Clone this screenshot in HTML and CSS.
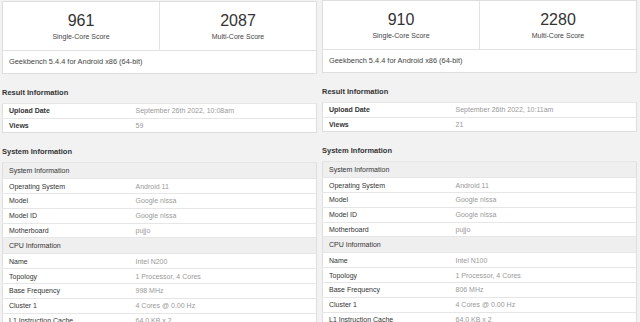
FILE: index.html
```html
<!DOCTYPE html>
<html lang="en">
<head>
    <meta charset="UTF-8">
    <title>Geekbench comparison</title>
    <link rel="stylesheet" href="styles.css">
</head>
<body>
    <div class="page">
        <div class="column first">
            <div class="card">
                <div class="scores">
                    <div class="score">
                        <div class="score-value">961</div>
                        <div class="score-label">Single-Core Score</div>
                    </div>
                    <div class="score">
                        <div class="score-value">2087</div>
                        <div class="score-label">Multi-Core Score</div>
                    </div>
                </div>
                <div class="version">Geekbench 5.4.4 for Android x86 (64-bit)</div>
            </div>

            <h3>Result Information</h3>
            <table class="info result">
                <tr><td class="name">Upload Date</td><td class="value">September 26th 2022, 10:08am</td></tr>
                <tr><td class="name">Views</td><td class="value">59</td></tr>
            </table>

            <h3>System Information</h3>
            <table class="info system">
                <tr class="head"><td colspan="2">System Information</td></tr>
                <tr><td class="name">Operating System</td><td class="value">Android 11</td></tr>
                <tr><td class="name">Model</td><td class="value">Google nissa</td></tr>
                <tr><td class="name">Model ID</td><td class="value">Google nissa</td></tr>
                <tr><td class="name">Motherboard</td><td class="value">pujjo</td></tr>
                <tr class="head"><td colspan="2">CPU Information</td></tr>
                <tr><td class="name">Name</td><td class="value">Intel N200</td></tr>
                <tr><td class="name">Topology</td><td class="value">1 Processor, 4 Cores</td></tr>
                <tr><td class="name">Base Frequency</td><td class="value">998 MHz</td></tr>
                <tr><td class="name">Cluster 1</td><td class="value">4 Cores @ 0.00 Hz</td></tr>
                <tr><td class="name">L1 Instruction Cache</td><td class="value">64.0 KB x 2</td></tr>
            </table>
        </div>

        <div class="column second">
            <div class="card">
                <div class="scores">
                    <div class="score">
                        <div class="score-value">910</div>
                        <div class="score-label">Single-Core Score</div>
                    </div>
                    <div class="score">
                        <div class="score-value">2280</div>
                        <div class="score-label">Multi-Core Score</div>
                    </div>
                </div>
                <div class="version">Geekbench 5.4.4 for Android x86 (64-bit)</div>
            </div>

            <h3>Result Information</h3>
            <table class="info result">
                <tr><td class="name">Upload Date</td><td class="value">September 26th 2022, 10:11am</td></tr>
                <tr><td class="name">Views</td><td class="value">21</td></tr>
            </table>

            <h3>System Information</h3>
            <table class="info system">
                <tr class="head"><td colspan="2">System Information</td></tr>
                <tr><td class="name">Operating System</td><td class="value">Android 11</td></tr>
                <tr><td class="name">Model</td><td class="value">Google nissa</td></tr>
                <tr><td class="name">Model ID</td><td class="value">Google nissa</td></tr>
                <tr><td class="name">Motherboard</td><td class="value">pujjo</td></tr>
                <tr class="head"><td colspan="2">CPU Information</td></tr>
                <tr><td class="name">Name</td><td class="value">Intel N100</td></tr>
                <tr><td class="name">Topology</td><td class="value">1 Processor, 4 Cores</td></tr>
                <tr><td class="name">Base Frequency</td><td class="value">806 MHz</td></tr>
                <tr><td class="name">Cluster 1</td><td class="value">4 Cores @ 0.00 Hz</td></tr>
                <tr><td class="name">L1 Instruction Cache</td><td class="value">64.0 KB x 2</td></tr>
            </table>
        </div>
    </div>
</body>
</html>
```

FILE: styles.css
```css
body {
    margin: 0;
    background: #f2f2f2;
    color: #333;
    font-family: "Liberation Sans", Arial, sans-serif;
    font-size: 7px;
    overflow: hidden;
}
.page {
    display: grid;
    grid-template-columns: 320px 320px;
    height: 322px;
    overflow: hidden;
}
.column {
    padding: 1px 3px 0 2px;
}
.column.second {
    margin-top: -1px;
}
.card {
    background: #fff;
    border: 1px solid #dedede;
}
.scores {
    display: flex;
    border-bottom: 1px solid #e2e2e2;
}
.score {
    flex: 1;
    text-align: center;
    padding: 10px 0 9px;
}
.score + .score {
    border-left: 1px solid #e2e2e2;
}
.score-value {
    font-size: 16px;
    line-height: 18px;
    color: #333;
}
.score-label {
    line-height: 9px;
    margin-top: 2px;
    color: #444;
}
.version {
    padding: 6px 6px 7px;
    font-size: 7.4px;
    line-height: 9px;
    color: #444;
}
h3 {
    margin: 14px 0 5px;
    font-size: 7.5px;
    line-height: 10px;
    font-weight: bold;
    color: #333;
}
.info {
    width: 100%;
    border-collapse: collapse;
    background: #fff;
    border: 1px solid #dedede;
}
.info td {
    height: 14.6px;
    padding: 0 6px;
    border-top: 1px solid #e6e6e6;
    line-height: 9px;
    box-sizing: border-box;
}
.info.system td {
    height: 14.8px;
}
.info .name {
    width: 127px;
    color: #333;
}
.info.result .name {
    font-weight: bold;
}
.info .value {
    color: #999;
}
.info .head td {
    height: 16px;
    background: #efefef;
    color: #333;
}
```
